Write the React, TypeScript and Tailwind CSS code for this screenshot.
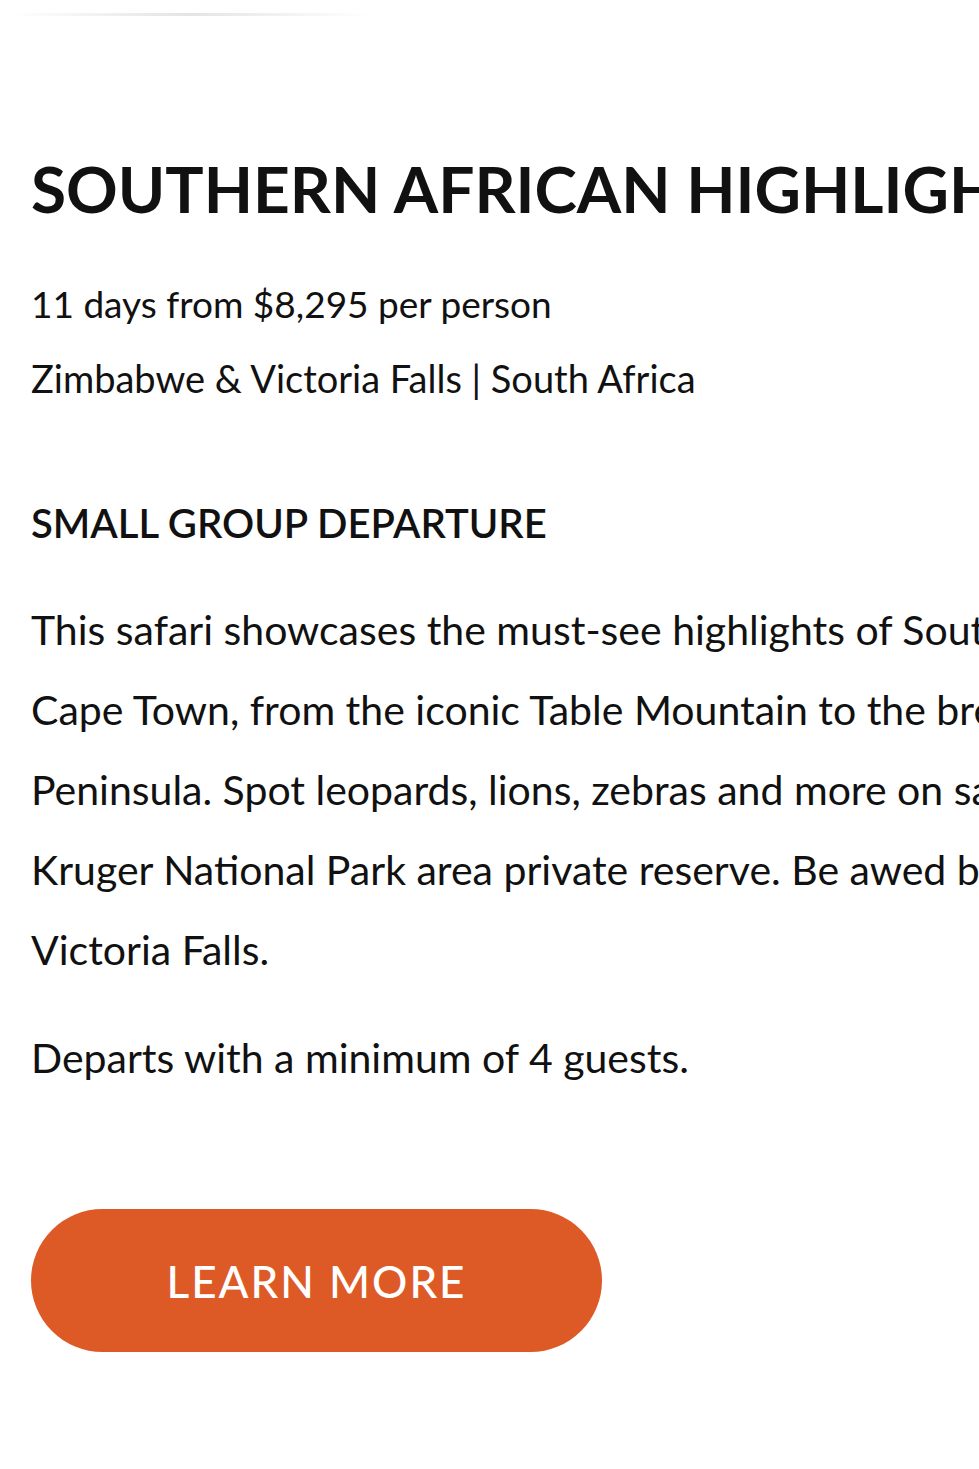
export default function App() {
  return (
    <div className="min-h-[1469px] w-full overflow-hidden bg-white text-[#111] [font-family:Lato,'Noto_Sans',sans-serif]">
      <div className="pl-[8px] pt-[13px]">
        <div className="h-[3px] w-[362px] bg-gradient-to-r from-transparent via-[#e4e4e4] to-transparent" />
      </div>
      <div className="pl-[31px]">
        <h1 className="mt-[133px] whitespace-nowrap text-[64px] font-bold leading-[80px]">
          SOUTHERN AFRICAN HIGHLIGHTS
        </h1>
        <p className="mt-[38px] whitespace-nowrap text-[37px] leading-[74px]">11 days from $8,295 per person</p>
        <p className="whitespace-nowrap text-[38px] leading-[74px]">Zimbabwe &amp; Victoria Falls | South Africa</p>
        <h2 className="mt-[78px] whitespace-nowrap text-[40px] font-semibold leading-[60px]">SMALL GROUP DEPARTURE</h2>
        <p className="mt-[37px] whitespace-nowrap text-[41px] leading-[80px]">
          This safari showcases the must-see highlights of Southern Africa. Explore
          <br />
          Cape Town, from the iconic Table Mountain to the breathtaking Cape
          <br />
          Peninsula. Spot leopards, lions, zebras and more on safari in a
          <br />
          Kruger National Park area private reserve. Be awed by the thundering
          <br />
          Victoria Falls.
        </p>
        <p className="mt-[28px] whitespace-nowrap text-[41px] leading-[80px]">Departs with a minimum of 4 guests.</p>
        <button className="mt-[111px] flex h-[143px] w-[571px] items-center justify-center rounded-full bg-[#dd5a27] text-[44px] font-medium tracking-[2px] text-white">
          LEARN MORE
        </button>
      </div>
    </div>
  );
}
